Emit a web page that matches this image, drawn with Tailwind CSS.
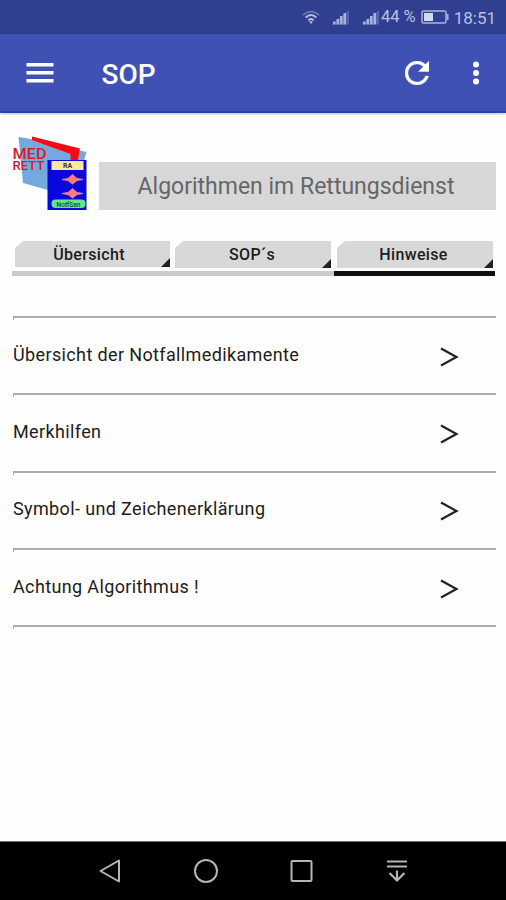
<!DOCTYPE html>
<html lang="de">
<head>
<meta charset="utf-8">
<title>SOP</title>
<script src="https://cdn.jsdelivr.net/npm/@tailwindcss/browser@4"></script>
</head>
<body class="w-[506px] h-[900px] overflow-hidden flex flex-col bg-[#fefefe] font-['Roboto','Noto_Sans',sans-serif] text-[#1c1c1c] whitespace-nowrap">
  <div class="h-[34px] shrink-0 bg-[#303f8f] flex items-center justify-end pr-[10px] text-[#b9c0e4] text-[17px] leading-none">
    <svg class="w-[18px] h-[16px]" viewBox="0 0 18 16" fill="none" stroke="#b9c0e4"><path d="M1 6Q9-1 17 6" stroke="#7b86bf" stroke-width="1.6"/><path d="M3.7 8.500Q9 3.500 14.300 8.500M6.300 11.300Q9 8.800 11.700 11.300" stroke-width="2"/><path d="M7 12.300h4L9 15z" fill="#b9c0e4" stroke="none"/></svg>
    <svg class="w-[18px] h-[16px] ml-[12px]" viewBox="0 0 18 16"><path d="M0 15.500L17 1v14.500z" fill="#5663ac"/><path d="M1 15.500v-3h2.500v3zM4.500 15.500V10H7v5.500zM8 15.500V7h2.500v8.500zM11.500 15.500V4H14v11.500z" fill="#a9b1db"/></svg>
    <svg class="w-[18px] h-[16px] ml-[12px]" viewBox="0 0 18 16"><path d="M0 15.500L17 1v14.500z" fill="#5663ac"/><path d="M1 15.500v-3h2.500v3zM4.500 15.500V10H7v5.500zM8 15.500V7h2.500v8.500zM11.500 15.500V4H14v11.500z" fill="#a9b1db"/></svg>
    <span class="ml-[1px] text-[16.500px]">44 %</span>
    <svg class="w-[28px] h-[16px] ml-[5px]" viewBox="0 0 28 16"><rect x="1" y="2" width="24" height="12" rx="2" fill="none" stroke="#8e98cb" stroke-width="2"/><path d="M26 5h1.500v6H26z" fill="#a9b1db"/><path d="M3 4h9v8H3z" fill="#d3d7ef"/></svg>
    <span class="ml-[5px] pt-[2px]">18:51</span>
  </div>
  <header class="h-[79px] shrink-0 bg-[#3f51b5] border-b-2 border-[#2944a8] shadow-[0_1px_3px_rgba(0,0,0,.25)] flex items-center pl-[26px] pr-[26px] text-white">
    <svg class="w-[28px] h-[20px] mt-[1px]" viewBox="0 0 28 20" fill="#fff"><path d="M.5 0h27v3.500H.5zM.5 8h27v3.500H.5zM.5 16h27v3.500H.5z"/></svg>
    <h1 class="ml-[47.500px] mt-[5px] text-[28px] font-medium leading-none">SOP</h1>
    <svg class="w-[24px] h-[24px] ml-auto mt-[1px]" viewBox="4 4 16 16" fill="#fff" stroke="#fff" stroke-width=".25"><path d="M17.650 6.350C16.200 4.900 14.210 4 12 4c-4.420 0-7.990 3.580-7.990 8s3.570 8 7.990 8c3.730 0 6.840-2.550 7.730-6h-2.080c-.82 2.330-3.040 4-5.650 4-3.310 0-6-2.690-6-6s2.690-6 6-6c1.660 0 3.140.69 4.220 1.780L13 11h7V4l-2.350 2.350z"/></svg>
    <svg class="w-[8px] h-[24px] ml-[43px] mt-[1px]" viewBox="0 0 8 24" fill="#fff"><circle cx="4" cy="3.500" r="3"/><circle cx="4" cy="12" r="3"/><circle cx="4" cy="20.500" r="3"/></svg>
  </header>
  <main class="flex-1 flex flex-col pl-[12px] pr-[10px] pt-[21px]">
    <div class="flex items-end h-[76px]">
      <svg class="w-[87px] h-[76px]" viewBox="12 134 87 76">
        <path d="M18.500 137L31 139L86.500 152L83 164V190H48L23 183z" fill="#73a9dc"/>
        <path d="M32 136.500L80 148.500L78 160H70.500V154L32 140z" fill="#ff0810"/>
        <text x="12.500" y="158.700" textLength="34" lengthAdjust="spacingAndGlyphs" font-family="Roboto" font-weight="500" font-size="15.500" fill="#e01828">MED</text>
        <text x="12.500" y="169.700" textLength="32" lengthAdjust="spacingAndGlyphs" font-family="Roboto" font-weight="500" font-size="13.500" fill="#e01828">RETT</text>
        <rect x="47.500" y="160" width="39" height="50" fill="#0808dc"/>
        <rect x="51.500" y="161" width="32" height="9" fill="#ffe7a0"/>
        <text x="67.500" y="168.300" text-anchor="middle" font-family="Roboto" font-weight="700" font-size="7" fill="#333">RA</text>
        <path d="M62 179.500l6-1 4.500-4 4.500 4 6 1-6 1-4.500 3.500-4.500-3.500zM62 193.500l6-1 4.500-4 4.500 4 6 1-6 1-4.500 3.500-4.500-3.500z" fill="#f57f88" stroke="#f57f88"/>
        <rect x="51.500" y="199.500" width="34" height="8.500" rx="4" fill="#63e58b"/>
        <text x="68.500" y="206.500" text-anchor="middle" font-family="Roboto" font-weight="500" font-size="6.500" fill="#174b35">NotfSan</text>
      </svg>
      <div class="w-[397px] h-[48px] bg-[#d7d7d7] flex items-center justify-center pt-[3px] pr-[3px] text-[23px] text-[#666]"><span>Algorithmen im Rettungsdienst</span></div>
    </div>
    <nav class="mt-[31px] w-[483px] flex text-[16px] font-medium tracking-[.35px]">
      <div class="w-[161px] h-[35px] pl-[3px] pr-[3px] border-b-[5px] border-[#cbcbcb]">
        <div class="relative h-[26px] bg-[#d8d8d8] [clip-path:polygon(8px_0,100%_0,100%_100%,0_100%,0_7px)] flex items-center justify-center pr-[7px] pt-[1px]">Übersicht<i class="absolute right-0 bottom-0 size-[9px] bg-[#222] [clip-path:polygon(100%_0,100%_100%,0_100%)]"></i></div>
      </div>
      <div class="w-[161px] h-[35px] pl-[2px] pr-[3px] border-b-[5px] border-[#cbcbcb]">
        <div class="relative h-[27px] bg-[#d8d8d8] [clip-path:polygon(8px_0,100%_0,100%_100%,0_100%,0_7px)] flex items-center justify-center pr-[2px]">SOP´s<i class="absolute right-0 bottom-0 size-[9px] bg-[#222] [clip-path:polygon(100%_0,100%_100%,0_100%)]"></i></div>
      </div>
      <div class="w-[161px] h-[35px] pl-[3px] pr-[2px] border-b-[5px] border-[#111]">
        <div class="relative h-[27px] bg-[#d8d8d8] [clip-path:polygon(8px_0,100%_0,100%_100%,0_100%,0_7px)] flex items-center justify-center pr-[3px]">Hinweise<i class="absolute right-0 bottom-0 size-[9px] bg-[#222] [clip-path:polygon(100%_0,100%_100%,0_100%)]"></i></div>
      </div>
    </nav>
    <ul class="mt-[40px] ml-[1px] w-[483px] border-t-2 border-[#adadad] text-[18px] tracking-[.37px]">
      <li class="relative h-[77.300px] border-b-2 border-[#adadad] flex items-center justify-between pr-[37px] before:absolute before:left-0 before:top-0 before:w-px before:h-[2px] before:bg-[#adadad]"><span class="-mt-[3px]">Übersicht der Notfallmedikamente</span><svg class="w-[19px] h-[20px] mt-[2px]" viewBox="0 0 19 20" fill="none" stroke="#222" stroke-width="2.200"><path d="M1 1.500L16.500 10L1 18.500"/></svg></li>
      <li class="relative h-[77.300px] border-b-2 border-[#adadad] flex items-center justify-between pr-[37px] before:absolute before:left-0 before:top-0 before:w-px before:h-[2px] before:bg-[#adadad]"><span class="-mt-[3px]">Merkhilfen</span><svg class="w-[19px] h-[20px] mt-[2px]" viewBox="0 0 19 20" fill="none" stroke="#222" stroke-width="2.200"><path d="M1 1.500L16.500 10L1 18.500"/></svg></li>
      <li class="relative h-[77.300px] border-b-2 border-[#adadad] flex items-center justify-between pr-[37px] before:absolute before:left-0 before:top-0 before:w-px before:h-[2px] before:bg-[#adadad]"><span class="-mt-[3px]">Symbol- und Zeichenerklärung</span><svg class="w-[19px] h-[20px] mt-[2px]" viewBox="0 0 19 20" fill="none" stroke="#222" stroke-width="2.200"><path d="M1 1.500L16.500 10L1 18.500"/></svg></li>
      <li class="relative h-[77.300px] border-b-2 border-[#adadad] flex items-center justify-between pr-[37px] before:absolute before:left-0 before:top-0 before:w-px before:h-[2px] before:bg-[#adadad] after:absolute after:left-0 after:-bottom-[4px] after:w-px after:h-[2px] after:bg-[#adadad]"><span class="-mt-[3px]">Achtung Algorithmus !</span><svg class="w-[19px] h-[20px] mt-[2px]" viewBox="0 0 19 20" fill="none" stroke="#222" stroke-width="2.200"><path d="M1 1.500L16.500 10L1 18.500"/></svg></li>
    </ul>
  </main>
  <footer class="h-[59px] shrink-0 bg-black border-t border-[#777] flex items-center pl-[99px]">
    <svg class="w-[298px] h-[26px]" viewBox="0 0 298 26" fill="none" stroke="#b5b5b5" stroke-width="2"><path d="M1.500 13L20 2.500V23.500z" stroke-linejoin="round"/><circle cx="107" cy="13" r="11"/><rect x="192.500" y="3" width="20" height="20" rx="1"/></svg>
    <svg class="w-[20px] h-[24px] -ml-[10px]" viewBox="0 0 20 24" fill="none" stroke="#b5b5b5" stroke-width="2.200"><path d="M0 2.500h20M0 7.500h20M10 11.500v10M2.500 14L10 21.500L17.500 14"/></svg>
  </footer>
</body>
</html>
